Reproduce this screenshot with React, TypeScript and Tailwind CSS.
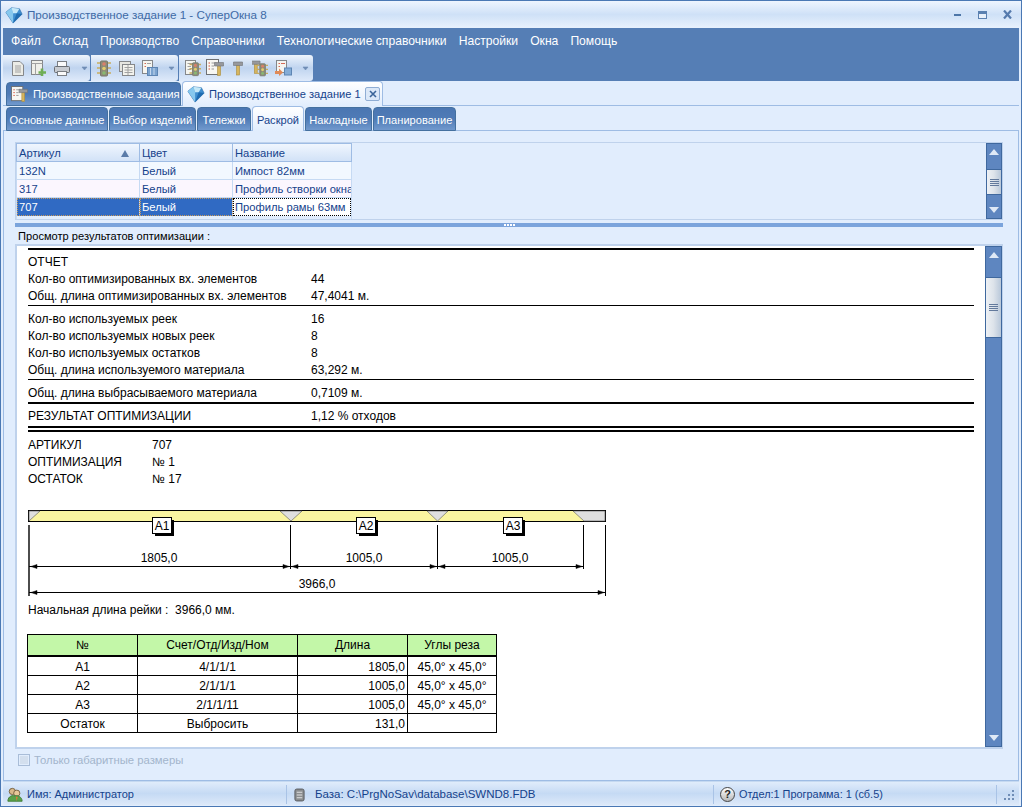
import React from "react";

const ui = { fontFamily: '"Liberation Sans", Arial, sans-serif' };

function Gem({ size = 18 }: { size?: number }) {
  return (
    <svg className="shrink-0" width={size} height={size} viewBox="0 0 20 20">
      <path d="M1 7 L7 2 L16 3 L19 9 L9 19 Z" fill="#3f8fd0" stroke="#2a6aa8" strokeWidth="0.7" />
      <path d="M1 7 L7 2 L9 8 L9 19 Z" fill="#86c8ee" />
      <path d="M7 2 L16 3 L13 8 L9 8 Z" fill="#c4e8f8" />
      <path d="M13 8 L19 9 L9 19 Z" fill="#1f6cb0" />
    </svg>
  );
}

function Doc() {
  return (
    <svg width="14" height="17" viewBox="0 0 14 17">
      <path d="M1.5 1.5 H9 L12.5 5 V15.5 H1.5 Z" fill="#ecece6" stroke="#85878a" />
      <path d="M4 6 H10 M4 8 H10 M4 10 H10 M4 12 H10" stroke="#a2a2a2" />
    </svg>
  );
}
function DocPlus() {
  return (
    <svg width="16" height="17" viewBox="0 0 16 17">
      <rect x="0.5" y="0.5" width="11" height="14" fill="#f0f0ea" stroke="#85878a" />
      <path d="M0.5 3.5 H11.5 M4.5 3.5 V14.5" stroke="#a2a2a2" />
      <path d="M11 8.5 V16 M7.5 12.5 H15" stroke="#6eae55" strokeWidth="2.6" />
    </svg>
  );
}
function Printer() {
  return (
    <svg width="16" height="17" viewBox="0 0 16 17">
      <rect x="3.5" y="1.5" width="9" height="6" fill="#fafafa" stroke="#7b7f84" />
      <rect x="0.5" y="6.5" width="15" height="6" rx="1" fill="#c7cbd1" stroke="#6a6e74" />
      <rect x="3.5" y="11.5" width="9" height="4" fill="#fafafa" stroke="#7b7f84" />
    </svg>
  );
}
function Light() {
  return (
    <g>
      <path d="M0 3 H3 M0 8 H3 M0 13 H3 M11 3 H14 M11 8 H14 M11 13 H14" stroke="#c9ad5e" strokeWidth="1.6" />
      <rect x="3.5" y="1" width="7" height="15" rx="1" fill="#8d8c78" stroke="#77776a" />
      <circle cx="7" cy="4" r="1.8" fill="#d9806a" />
      <circle cx="7" cy="8.5" r="1.8" fill="#e3cd6e" />
      <circle cx="7" cy="13" r="1.8" fill="#88b872" />
    </g>
  );
}
function Traffic() {
  return (
    <svg width="14" height="17" viewBox="0 0 14 17">
      <Light />
    </svg>
  );
}
function Pages() {
  return (
    <svg width="16" height="17" viewBox="0 0 16 17">
      <rect x="0.5" y="1.5" width="11" height="10" fill="#e5e5e0" stroke="#85878a" />
      <rect x="3.5" y="4.5" width="12" height="11" fill="#f3f3ee" stroke="#85878a" />
      <path d="M5.5 7.5 H13.5 M5.5 10 H13.5 M5.5 12.5 H13.5 M9 5 V15" stroke="#a2a2a2" />
    </svg>
  );
}
function DocChart() {
  return (
    <svg width="16" height="17" viewBox="0 0 16 17">
      <rect x="0.5" y="0.5" width="10" height="13" fill="#f5f5f0" stroke="#85878a" />
      <path d="M2.5 3.5 H4 M2.5 6.5 H4" stroke="#d56a56" />
      <path d="M5 3.5 H9" stroke="#a2a2a2" />
      <rect x="5.5" y="7.5" width="10" height="8" fill="#7ba3cf" stroke="#5d85b3" />
      <path d="M8.5 8 V15 M12 8 V15" stroke="#c5d8ee" />
    </svg>
  );
}
function Hammer({ x = 9, y = 5, s = 1 }: { x?: number; y?: number; s?: number }) {
  return (
    <g transform={`translate(${x} ${y}) scale(${s})`}>
      <rect x="3" y="3" width="3" height="10" fill="#d7b55e" stroke="#a88a3a" strokeWidth="0.6" />
      <path d="M0 0 H9 V3.5 H0 Z" fill="#96989c" stroke="#707276" strokeWidth="0.6" />
    </g>
  );
}
function DocHammer({ size = 18 }: { size?: number }) {
  return (
    <svg className="shrink-0" width={size} height={size} viewBox="0 0 18 18">
      <rect x="0.5" y="0.5" width="12" height="15" fill="#f7f7f3" stroke="#6f7174" />
      <path d="M2.5 4 H4 M2.5 7 H4 M2.5 10 H4" stroke="#d4503c" />
      <path d="M5.5 4 H10.5 M5.5 7 H8 M5.5 10 H8" stroke="#9a9a9a" />
      <Hammer x={8.5} y={3.5} />
    </svg>
  );
}
function ChevDown() {
  return (
    <svg width="7" height="10" viewBox="0 0 7 10">
      <path d="M1 4 H6 L3.5 7 Z" stroke="#6f8db6" fill="#6f8db6" strokeWidth="0.6" />
    </svg>
  );
}

function Seg({ w, children }: { w: string; children: React.ReactNode }) {
  return (
    <div className={`flex h-[26px] items-center rounded-tr-[3px] rounded-br-[3px] bg-gradient-to-b from-[#eef4fc] via-[#bfd4ef] to-[#dfeafa] ${w}`}>
      {children}
    </div>
  );
}

function Toolbar() {
  return (
    <div className="flex h-[26px] gap-[1px]">
      <Seg w="w-[87px]">
        <span className="ml-[8px] flex"><Doc /></span>
        <span className="ml-[6px] flex"><DocPlus /></span>
        <span className="ml-[7px] flex"><Printer /></span>
        <span className="ml-[11px] flex"><ChevDown /></span>
      </Seg>
      <Seg w="w-[87px]">
        <span className="ml-[6px] flex"><Traffic /></span>
        <span className="ml-[8px] flex"><Pages /></span>
        <span className="ml-[7px] flex"><DocChart /></span>
        <span className="ml-[10px] flex"><ChevDown /></span>
      </Seg>
      <Seg w="w-[134px]">
        <span className="ml-[6px] flex">
          <svg width="16" height="17" viewBox="0 0 16 17">
            <rect x="0.5" y="0.5" width="10" height="14" fill="#f5f5f0" stroke="#85878a" />
            <path d="M2.5 3.5 H8 M2.5 6.5 H6 M2.5 9.5 H6" stroke="#a2a2a2" />
            <g transform="translate(4.5 2) scale(0.85)"><Light /></g>
          </svg>
        </span>
        <span className="ml-[5px] flex"><DocHammer /></span>
        <span className="ml-[9px] flex">
          <svg width="10" height="17" viewBox="0 0 10 17"><Hammer x={0.5} y={2} s={1} /></svg>
        </span>
        <span className="ml-[9px] flex">
          <svg width="16" height="17" viewBox="0 0 16 17">
            <Hammer x={-0.5} y={1} s={0.95} />
            <g transform="translate(5 3) scale(0.8)"><Light /></g>
          </svg>
        </span>
        <span className="ml-[7px] flex">
          <svg width="17" height="17" viewBox="0 0 17 17">
            <rect x="1.5" y="0.5" width="10" height="12" fill="#f5f5f0" stroke="#85878a" />
            <path d="M3.5 3.5 H5 M6 3.5 H10 M3.5 6.5 H5" stroke="#d56a56" />
            <path d="M0 11 H4 V8.5 L8 12.5 L4 16 V14 H0 Z" fill="#e08a58" />
            <rect x="9.5" y="8" width="7" height="7" fill="#84acd6" stroke="#5d85b3" />
          </svg>
        </span>
        <span className="ml-[10px] flex"><ChevDown /></span>
      </Seg>
    </div>
  );
}

const tabOff = "border-[#44709f] bg-gradient-to-b from-[#4a76b2] via-[#4f7bb6] to-[#7199cd] text-white";
const tabOn = "border-[#9ebce4] border-b-0 bg-gradient-to-b from-[#ffffff] to-[#e1edfd] text-[#15428b]";

function InnerTab({ label, active, w }: { label: string; active?: boolean; w: string }) {
  return (
    <div
      className={`flex items-center justify-center whitespace-nowrap rounded-t-[4px] border pt-[3px] text-[11.1px] ${w} ${
        active ? `h-[25px] ${tabOn}` : `mt-[1px] h-[24px] ${tabOff}`
      }`}
    >
      {label}
    </div>
  );
}

function ScrollBtn({ up, h }: { up?: boolean; h: string }) {
  return (
    <div className={`flex justify-center bg-[#5e86c0] ${h} ${up ? "items-start pt-[5px]" : "items-end pb-[5px]"}`}>
      <svg width="10" height="6" viewBox="0 0 10 6">
        {up ? <path d="M5 0 L10 6 H0 Z" fill="#dfe9f6" /> : <path d="M0 0 H10 L5 6 Z" fill="#dfe9f6" />}
      </svg>
    </div>
  );
}
function Thumb({ h }: { h: string }) {
  return (
    <div className={`flex items-center justify-center border-y border-[#3f689e] bg-gradient-to-r from-[#eef1f5] via-[#dde3ea] to-[#b9c8da] ${h}`}>
      <div className="flex flex-col gap-[1px]">
        <div className="h-[1px] w-[9px] bg-[#62799c]" />
        <div className="h-[1px] w-[9px] bg-[#62799c]" />
        <div className="h-[1px] w-[9px] bg-[#62799c]" />
        <div className="h-[1px] w-[9px] bg-[#62799c]" />
      </div>
    </div>
  );
}

function Grid() {
  const Cell = ({ w, children, cls = "" }: { w: string; children?: React.ReactNode; cls?: string }) => (
    <div className={`h-full overflow-hidden whitespace-nowrap border-r border-[#c6daf3] pl-[2px] pt-[1px] ${w} ${cls}`}>{children}</div>
  );
  const c1 = "w-[123px]";
  const c2 = "w-[93px]";
  const c3 = "w-[118px]";
  return (
    <div className="flex h-[78px] border border-[#bfd2ec]">
      <div className="flex flex-1 flex-col text-[11.2px] leading-[17px] text-[#15428b]">
        <div className="flex h-[19px] w-[336px] border border-[#9ebce4] bg-gradient-to-b from-[#f0f6fe] to-[#d2e2f7] leading-[15px]">
          <div className="flex w-[123px] items-center justify-between border-r border-[#9ebce4] pl-[2px] pr-[10px] pt-[2px]">
            <span>Артикул</span>
            <svg width="8" height="7" viewBox="0 0 8 7"><path d="M4 0 L8 7 H0 Z" fill="#5a7ba8" /></svg>
          </div>
          <div className="w-[93px] border-r border-[#9ebce4] pl-[2px] pt-[2px]">Цвет</div>
          <div className="pl-[2px] pt-[2px]">Название</div>
        </div>
        <div className="flex h-[18px] w-[336px] border-x border-b border-[#c6daf3] bg-[#f2f8ff]">
          <Cell w={c1}>132N</Cell><Cell w={c2}>Белый</Cell><Cell w={c3} cls="border-r-0">Импост 82мм</Cell>
        </div>
        <div className="flex h-[18px] w-[336px] border-x border-b border-[#c6daf3] bg-[#fbf6fe]">
          <Cell w={c1}>317</Cell><Cell w={c2}>Белый</Cell><Cell w={c3} cls="border-r-0">Профиль створки окна</Cell>
        </div>
        <div className="flex h-[18px] w-[336px] border-x border-[#c6daf3] bg-[#ffffff]">
          <div className="h-full w-[123px] border-r border-[#c6daf3] bg-[#306ac3] pl-[2px] pt-[1px] text-white outline-1 -outline-offset-1 outline-dotted outline-[#c89a5c]">707</div>
          <div className="h-full w-[93px] border-r border-[#c6daf3] bg-[#306ac3] pl-[2px] pt-[1px] text-white outline-1 -outline-offset-1 outline-dotted outline-[#c89a5c]">Белый</div>
          <div className="h-full w-[118px] overflow-hidden whitespace-nowrap pl-[2px] pt-[1px] outline-1 -outline-offset-1 outline-dotted outline-black">Профиль рамы 63мм</div>
        </div>
        <div className="flex h-[4px] w-[336px] border-x border-[#c6daf3]">
          <div className="w-[123px] border-r border-[#c6daf3]" />
          <div className="w-[93px] border-r border-[#c6daf3]" />
        </div>
      </div>
      <div className="flex w-[16px] flex-col self-stretch border border-[#3f689e]">
        <ScrollBtn up h="h-[25px]" />
        <Thumb h="h-[26px]" />
        <ScrollBtn h="flex-1" />
      </div>
    </div>
  );
}

function Line({ h, mt }: { h: string; mt: string }) {
  return <div className={`w-[946px] bg-black ${h} ${mt}`} />;
}

function Row({ a, b, x = "w-[283px]", h = "h-[17px]" }: { a: string; b: string; x?: string; h?: string }) {
  return (
    <div className={`flex items-center whitespace-nowrap ${h}`}>
      <span className={x}>{a}</span>
      <span>{b}</span>
    </div>
  );
}

function Diagram() {
  const tick = (x: number, y1: number, y2: number) => <path d={`M${x + 0.5} ${y1} V${y2}`} stroke="#000" />;
  const arrowR = (x: number, y: number) => <path d={`M${x} ${y - 2} L${x + 6} ${y} L${x} ${y + 2} Z`} fill="#000" stroke="#000" strokeWidth="0.5" />;
  const arrowL = (x: number, y: number) => <path d={`M${x} ${y - 2} L${x - 6} ${y} L${x} ${y + 2} Z`} fill="#000" stroke="#000" strokeWidth="0.5" />;
  const label = (x: number, t: string) => (
    <g>
      <rect x={x + 3} y={520} width={19} height={16} fill="#000" />
      <rect x={x + 0.5} y={517.5} width={19} height={16} fill="#fff" stroke="#000" />
      <text x={x + 10} y={530} textAnchor="middle" fontSize="12" fontFamily="Liberation Sans">{t}</text>
    </g>
  );
  const num = (x: number, y: number, t: string) => (
    <text x={x} y={y} textAnchor="middle" fontSize="12" fontFamily="Liberation Sans" fill="#000">{t}</text>
  );
  return (
    <svg className="block" width="600" height="90" viewBox="20 508 600 90">
      <rect x="28.5" y="510.5" width="577" height="11" fill="#faf5a0" stroke="#000" />
      <path d="M29 511 H40 L29 521 Z" fill="#dfdfdf" stroke="#555" strokeWidth="0.6" />
      <path d="M280 511 H302 L291 521 Z" fill="#dfdfdf" stroke="#555" strokeWidth="0.6" />
      <path d="M427 511 H448 L437.5 521 Z" fill="#dfdfdf" stroke="#555" strokeWidth="0.6" />
      <path d="M573 511 H605 V521 H584 Z" fill="#dfdfdf" stroke="#555" strokeWidth="0.6" />
      {label(152, "A1")}
      {label(356, "A2")}
      {label(503, "A3")}
      <path d="M29 525 V596" stroke="#000" strokeWidth="1.4" />
      {tick(290, 525, 569)}
      {tick(437, 525, 569)}
      {tick(583, 525, 569)}
      {tick(605, 525, 596)}
      <path d="M29 566.5 H583" stroke="#000" />
      <path d="M29 592.5 H605" stroke="#000" />
      {arrowL(37, 566.5)}{arrowR(283, 566.5)}{arrowL(298, 566.5)}{arrowR(430, 566.5)}{arrowL(445, 566.5)}{arrowR(576, 566.5)}
      {arrowL(37, 592.5)}{arrowR(598, 592.5)}
      {num(159, 562, "1805,0")}
      {num(364, 562, "1005,0")}
      {num(510, 562, "1005,0")}
      {num(317, 588, "3966,0")}
    </svg>
  );
}

function CutTable() {
  const rows = [
    ["A1", "4/1/1/1", "1805,0", "45,0° x 45,0°"],
    ["A2", "2/1/1/1", "1005,0", "45,0° x 45,0°"],
    ["A3", "2/1/1/11", "1005,0", "45,0° x 45,0°"],
    ["Остаток", "Выбросить", "131,0", ""],
  ];
  return (
    <div className="-ml-[1px] mt-[15px] w-[470px] border border-black">
      <div className="flex h-[22px] items-center border-b-2 border-black bg-[#c3f7a8] text-center">
        <div className="flex h-full w-[110px] items-center justify-center border-r border-black">№</div>
        <div className="flex h-full w-[160px] items-center justify-center border-r border-black">Счет/Отд/Изд/Ном</div>
        <div className="flex h-full w-[110px] items-center justify-center border-r border-black">Длина</div>
        <div className="flex-1 text-center">Углы реза</div>
      </div>
      {rows.map((r, i) => (
        <div key={r[0]} className={`flex items-center ${i < 3 ? "h-[19px] border-b border-black" : "h-[18px]"}`}>
          <div className="flex h-full w-[110px] items-center justify-center border-r border-black pt-[2px]">{r[0]}</div>
          <div className="flex h-full w-[160px] items-center justify-center border-r border-black pt-[2px]">{r[1]}</div>
          <div className="flex h-full w-[110px] items-center justify-end border-r border-black pr-[2px] pt-[2px]">{r[2]}</div>
          <div className="flex-1 pt-[2px] text-center">{r[3]}</div>
        </div>
      ))}
    </div>
  );
}

function Report() {
  return (
    <div className="flex h-[505px] border-2 border-r border-[#bfd2ec] bg-white">
      <div className="flex-1 overflow-hidden pl-[11px] pt-[2px] text-[12px] text-black">
        <Line h="h-[2px]" mt="mt-0" />
        <div className="mt-[3px]"><Row a="ОТЧЕТ" b="" /></div>
        <Row a="Кол-во оптимизированных вх. элементов" b="44" />
        <Row a="Общ. длина оптимизированных вх. элементов" b="47,4041 м." h="h-[18px]" />
        <Line h="h-[1px]" mt="mt-0" />
        <div className="mt-[4px]">
          <Row a="Кол-во используемых реек" b="16" />
          <Row a="Кол-во используемых новых реек" b="8" />
          <Row a="Кол-во используемых остатков" b="8" />
          <Row a="Общ. длина используемого материала" b="63,292 м." />
        </div>
        <Line h="h-[1px]" mt="mt-[1px]" />
        <div className="mt-[4px]"><Row a="Общ. длина выбрасываемого материала" b="0,7109 м." /></div>
        <Line h="h-[2px]" mt="mt-[1px]" />
        <div className="mt-[3px]"><Row a="РЕЗУЛЬТАТ ОПТИМИЗАЦИИ" b="1,12 % отходов" /></div>
        <Line h="h-[2px]" mt="mt-[2px]" />
        <Line h="h-[2px]" mt="mt-[2px]" />
        <div className="mt-[4px]">
          <Row a="АРТИКУЛ" b="707" x="w-[124px]" />
          <Row a="ОПТИМИЗАЦИЯ" b="№ 1" x="w-[124px]" />
          <Row a="ОСТАТОК" b="№ 17" x="w-[124px]" />
        </div>
        <div className="-ml-[8px] mt-[21px]"><Diagram /></div>
        <div className="mt-[4px] h-[17px] leading-[17px]">Начальная длина рейки :&nbsp; 3966,0 мм.</div>
        <CutTable />
      </div>
      <div className="flex w-[17px] flex-col border border-[#3f689e]">
        <ScrollBtn up h="h-[30px]" />
        <Thumb h="h-[61px]" />
        <ScrollBtn h="flex-1" />
      </div>
    </div>
  );
}

export default function App() {
  return (
    <div className="flex h-[807px] w-[1022px] flex-col overflow-hidden border border-[#4a78b4] bg-[#e1edfd] px-[2px] pb-[1px]" style={ui}>
      <div className="-mx-[2px] flex h-[27px] shrink-0 items-center bg-gradient-to-b from-[#eef5fe] via-[#cfe1f7] to-[#e8f1fd] pl-[4px] text-[11.65px] text-[#3e6aa6]">
        <Gem size={18} />
        <span className="ml-[4px] flex-1">Производственное задание 1 - СуперОкна 8</span>
        <span className="mr-[17px] mt-[1px] h-[2px] w-[7px] bg-[#4d76a8]" />
        <span className="mr-[16px] h-[8px] w-[9px] border border-t-[3px] border-[#5a80b0] bg-[#e7eff9]" />
        <svg className="mr-[9px]" width="9" height="9" viewBox="0 0 9 9"><path d="M1 0.5 L8 8.5 M8 0.5 L1 8.5" stroke="#557aad" strokeWidth="2.2" /></svg>
      </div>
      <div className="h-[53px] shrink-0 bg-[#557eb5]">
        <div className="flex h-[27px] items-center gap-[12px] pl-[8px] text-[12.15px] text-white">
          <span>Файл</span><span>Склад</span><span>Производство</span><span>Справочники</span><span>Технологические справочники</span><span>Настройки</span><span>Окна</span><span>Помощь</span>
        </div>
        <Toolbar />
      </div>
      <div className="flex h-[25px] shrink-0 border-b border-[#9ebce4] pl-[3px]">
        <div className={`mt-[1px] flex h-[24px] w-[175px] items-center whitespace-nowrap rounded-t-[4px] border pl-[4px] text-[11.3px] ${tabOff}`}>
          <DocHammer size={17} />
          <span className="ml-[5px] pt-[1px]">Производственные задания</span>
        </div>
        <div className={`ml-[1px] flex h-[25px] w-[201px] items-center whitespace-nowrap rounded-t-[4px] border pl-[4px] text-[11.1px] ${tabOn}`}>
          <Gem size={18} />
          <span className="ml-[4px] pt-[1px]">Производственное задание 1</span>
          <span className="ml-auto mr-[2px] flex h-[14px] w-[15px] items-center justify-center rounded-[2px] border border-[#8fadd4] bg-[#dbe8f8]">
            <svg width="8" height="8" viewBox="0 0 8 8"><path d="M1 1 L7 7 M7 1 L1 7" stroke="#3a6499" strokeWidth="1.6" /></svg>
          </span>
        </div>
      </div>
      <div className="flex h-[25px] shrink-0 gap-[1px] border-b border-[#9ebce4] pl-[3px]">
        <InnerTab label="Основные данные" w="w-[102px]" />
        <InnerTab label="Выбор изделий" w="w-[87px]" />
        <InnerTab label="Тележки" w="w-[54px]" />
        <InnerTab label="Раскрой" w="w-[52px]" active />
        <InnerTab label="Накладные" w="w-[67px]" />
        <InnerTab label="Планирование" w="w-[83px]" />
      </div>
      <div className="h-[650px] shrink-0 border-x border-b border-[#9ebce4] pl-[11px] pr-[15px] pt-[11px]">
        <Grid />
        <div className="mt-[3px] flex h-[4px] items-center justify-center gap-[1px] bg-[#7ba4dc]">
          <span className="h-[2px] w-[2px] bg-white" />
          <span className="h-[2px] w-[2px] bg-white" />
          <span className="h-[2px] w-[2px] bg-white" />
          <span className="h-[2px] w-[2px] bg-white" />
        </div>
        <div className="h-[17px] pt-[1px] text-[11.1px] leading-[16px] text-black">&nbsp;Просмотр результатов оптимизации :</div>
        <Report />
        <div className="mt-[3px] flex items-center pl-[3px] text-[11.3px] text-[#a3b5cc]">
          <span className="flex h-[12px] w-[12px] items-center justify-center border border-[#a9bdd8]"><span className="h-[8px] w-[8px] bg-[#d3dfee]" /></span>
          <span className="ml-[4px]">Только габаритные размеры</span>
        </div>
      </div>
      <div className="flex h-[24px] shrink-0 items-center border-t border-[#c5d9f1] bg-gradient-to-b from-[#e0ecfb] via-[#c5daf4] to-[#dde9f9] pt-[2px] text-[11px] text-[#15428b]">
        <svg className="ml-[4px] shrink-0" width="16" height="18" viewBox="0 0 18 18">
          <circle cx="6" cy="5" r="3.5" fill="#d9b98a" stroke="#6f5a3a" />
          <circle cx="11" cy="7" r="3.5" fill="#e8c89a" stroke="#6f5a3a" />
          <path d="M1 16 C1 10 7 9 8 10 C12 9 17 11 17 16 Z" fill="#5aa24a" stroke="#3d7a33" />
          <path d="M10 11 L11 16 L12 11 Z" fill="#e4773a" />
        </svg>
        <span className="ml-[4px] w-[259px]">Имя: Администратор</span>
        <span className="h-[19px] w-[1px] bg-[#a9c3e6]" />
        <svg className="ml-[7px] shrink-0" width="11" height="14" viewBox="0 0 12 14">
          <rect x="1" y="0.5" width="10" height="13" rx="2" fill="#8b8e90" stroke="#55585c" />
          <path d="M3 4 H9 M3 7 H9 M3 10 H9" stroke="#e8e8e8" />
        </svg>
        <span className="ml-[10px] w-[398px] whitespace-nowrap text-[11.5px]">База: C:\PrgNoSav\database\SWND8.FDB</span>
        <span className="h-[19px] w-[1px] bg-[#a9c3e6]" />
        <span className="ml-[6px] flex h-[15px] w-[15px] items-center justify-center rounded-full border border-[#444] bg-gradient-to-b from-[#ffffff] to-[#b8b8b8] text-[11px] font-bold leading-none text-[#222]">?</span>
        <span className="ml-[4px] whitespace-nowrap text-[10.9px]">Отдел:1 Программа: 1 (сб.5)</span>
        <span className="ml-auto h-[19px] w-[1px] bg-[#a9c3e6]" />
        <svg className="ml-[6px] mr-[4px] shrink-0" width="12" height="12" viewBox="0 0 12 12">
          <path d="M9 1 h2 v2 h-2 Z M5 5 h2 v2 h-2 Z M9 5 h2 v2 h-2 Z M1 9 h2 v2 h-2 Z M5 9 h2 v2 h-2 Z M9 9 h2 v2 h-2 Z" fill="#6f8db6" />
        </svg>
      </div>
    </div>
  );
}
